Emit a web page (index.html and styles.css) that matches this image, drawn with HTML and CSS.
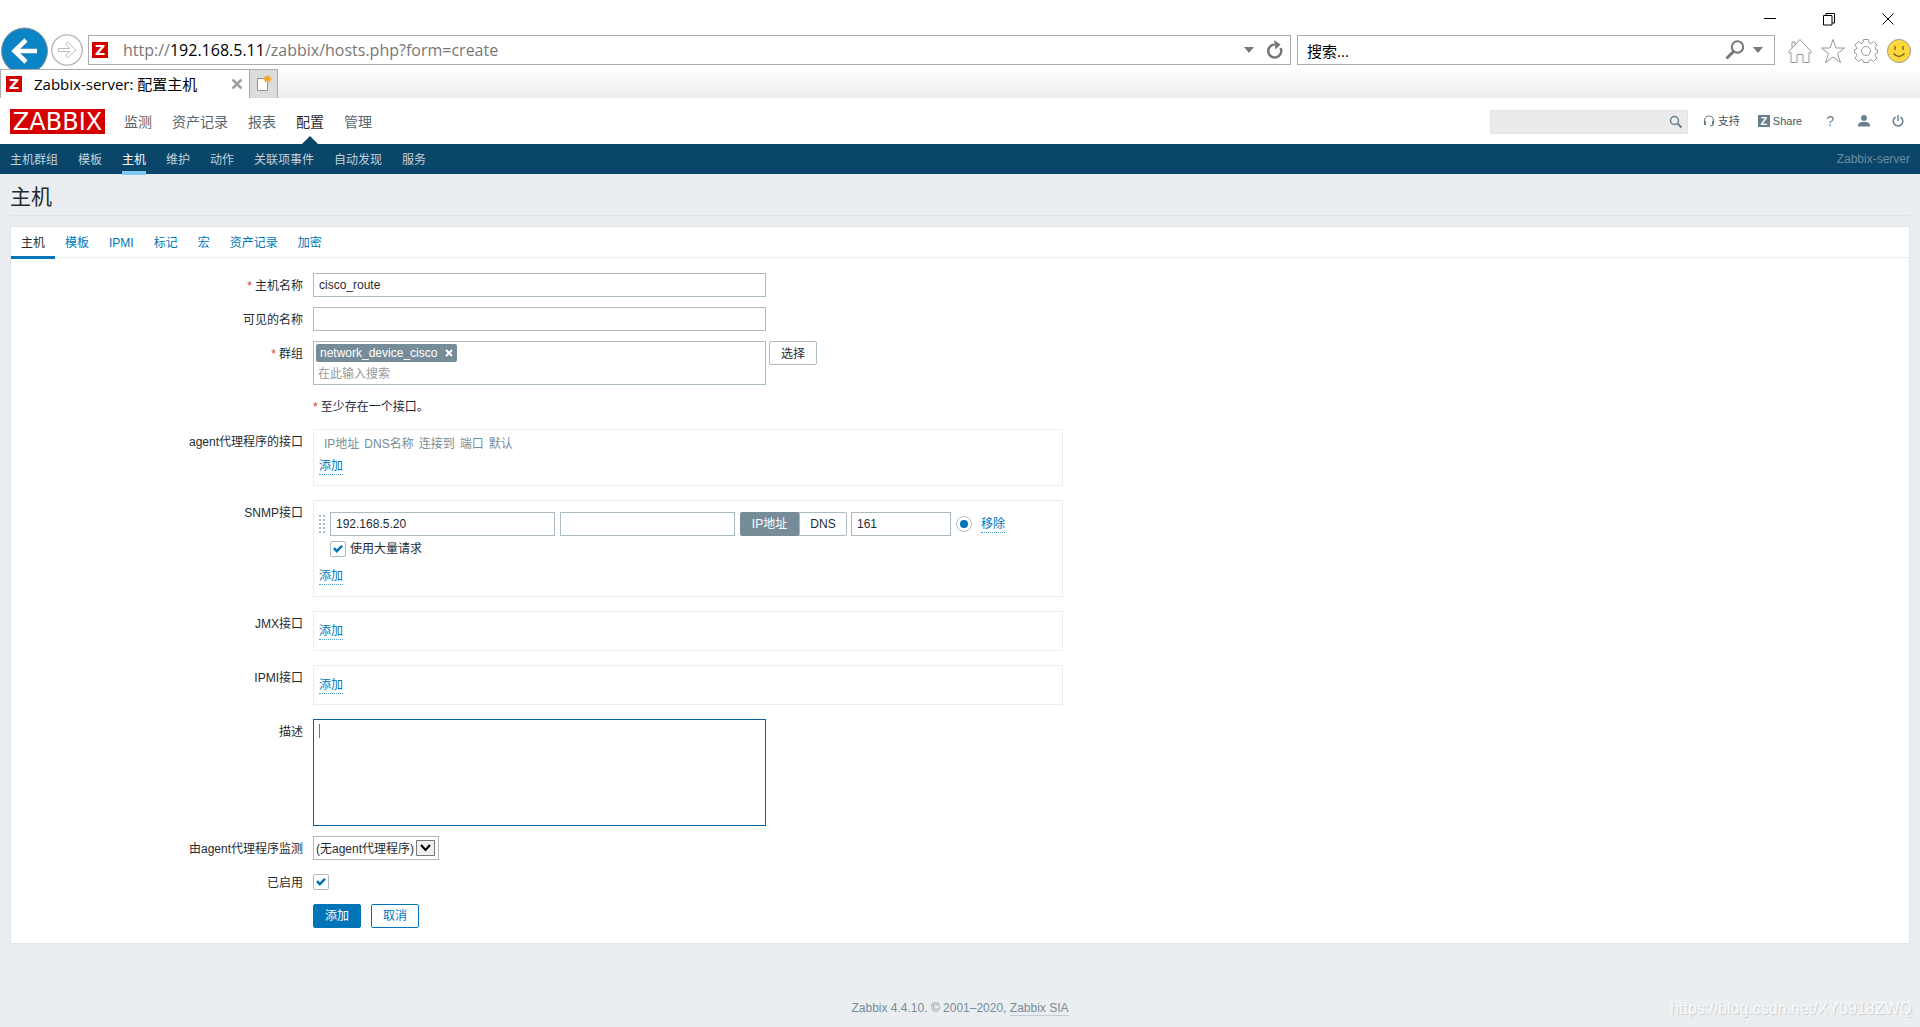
FILE: index.html
```html
<!DOCTYPE html>
<html lang="zh-CN">
<head>
<meta charset="utf-8">
<meta name="viewport" content="width=device-width, initial-scale=1">
<title>Zabbix-server: 配置主机</title>
<link rel="stylesheet" href="styles.css">
</head>
<body>
<div class="browser">
  <div class="window-controls">
    <button type="button" aria-label="最小化"><svg width="14" height="14"><path d="M1 6.500h12"/></svg></button>
    <button type="button" aria-label="还原"><svg width="14" height="14"><path d="M1.500 3.500h8.500v9.500h-8.500zM4 3.500v-2h8.500v9.500h-2.500"/></svg></button>
    <button type="button" aria-label="关闭"><svg width="14" height="14"><path d="M1.500 1.500l11 11M12.500 1.500l-11 11"/></svg></button>
  </div>
  <div class="navbar">
    <button type="button" class="back" aria-label="后退">
      <svg width="48" height="48" viewBox="0 0 48 48"><circle cx="24.500" cy="24" r="23" fill="#0a84c4" stroke="#8a9298" stroke-width="1"/><path d="M37 24H15M26 13L14.500 24L26 35" fill="none" stroke="#fff" stroke-width="4.500"/></svg>
    </button>
    <button type="button" class="forward" aria-label="前进">
      <svg width="32" height="32" viewBox="0 0 32 32" fill="none"><circle cx="16" cy="16" r="15.200" stroke="#b4b4b4" stroke-width="1.300"/><path d="M7.500 14.500h11l-4-4.500 2-2 8.500 8-8.500 8-2-2 4-4.500h-11z" stroke="#bbb"/></svg>
    </button>
    <div class="address">
      <span class="favicon">Z</span>
      <span class="url">http://<b>192.168.5.11</b>/zabbix/hosts.php?form=create</span>
      <svg width="10" height="6"><path d="M0 0h10l-5 6z" fill="#777"/></svg>
      <svg width="18" height="20" viewBox="0 0 18 20"><path d="M8.500 4.500A6.500 6.500 0 1 0 14.500 8" fill="none" stroke="#777" stroke-width="2.500"/><path d="M8 0l6.500 4.500-5 5z" fill="#777"/></svg>
    </div>
    <div class="web-search">
      <input type="text" value="搜索..." aria-label="搜索">
      <svg width="20" height="20" viewBox="0 0 20 20" fill="none" stroke="#777"><circle cx="12.500" cy="7" r="5.700" stroke-width="2"/><path d="M8.500 11.500L1.500 18.500" stroke-width="3"/></svg>
      <svg width="10" height="6"><path d="M0 0h10l-5 6z" fill="#777"/></svg>
    </div>
    <div class="browser-tools">
      <button type="button" aria-label="主页"><svg width="26" height="26" viewBox="0 0 26 26"><path d="M1.500 14L13 1.500 24.500 14l-1.500 1.500-1-1v10h-6v-8h-6v8H4v-10l-1 1zM5 10V4h3v3"/></svg></button>
      <button type="button" aria-label="收藏夹"><svg width="26" height="26" viewBox="0 0 26 26"><path d="M13 1.500l3 8.500h8.500l-7 5.500 3 9-7.500-5.500-7.500 5.500 3-9-7-5.500H10z"/></svg></button>
      <button type="button" aria-label="工具"><svg width="26" height="26" viewBox="0 0 26 26"><path d="M10.500 1.500h5l.5 3.200 1.800.8 2.700-2 3.500 3.500-2 2.700.8 1.800 1.700.3v3l-1.700.7-.8 1.800 2 2.700-3.500 3.500-2.700-2-1.800.8-.5 2.200h-5l-.5-2.200-1.800-.8-2.700 2L2 20l2-2.700-.8-1.800-1.700-.7v-3l1.700-.3.800-1.800-2-2.700 3.500-3.500 2.700 2 1.800-.8z"/><circle cx="13" cy="13" r="4.500"/></svg></button>
      <button type="button" aria-label="反馈"><svg width="26" height="26" viewBox="0 0 26 26"><circle class="face" cx="13" cy="13" r="11.500"/><path class="smile" d="M9 8v4M17 8v4M7.500 15.500q5.500 6 11 0"/></svg></button>
    </div>
  </div>
  <div class="tabstrip">
    <div class="browser-tab"><span class="favicon">Z</span><span class="tab-title">Zabbix-server: 配置主机</span>
      <button type="button" aria-label="关闭标签页"><svg width="12" height="12"><path d="M1.500 1.500l9 9M10.500 1.500l-9 9" stroke="#a0a0a0" stroke-width="2.500"/></svg></button></div>
    <button type="button" class="new-tab" aria-label="新建标签页"><svg width="16" height="18" viewBox="0 0 16 18"><path d="M1.500 3.500h10v12h-10z" fill="#fff" stroke="#909090"/><path d="M11.500 0v8M7.500 4h8M8.700 1.200l5.600 5.600M14.300 1.200L8.700 6.800" stroke="#f2a51d" stroke-width="1.500"/></svg></button>
  </div>
</div>

<header class="top">
  <a class="logo" href="#">ZABBIX</a>
  <nav class="main-menu" aria-label="主菜单">
    <a href="#">监测</a><a href="#">资产记录</a><a href="#">报表</a><a href="#" class="selected">配置</a><a href="#">管理</a>
  </nav>
  <div class="search">
    <input type="text" aria-label="搜索">
    <button type="button" aria-label="搜索"><svg width="14" height="14" viewBox="0 0 14 14" fill="none" stroke="#69808d"><circle cx="5.500" cy="5.500" r="4" stroke-width="1.500"/><path d="M8.500 8.500l4 4" stroke-width="2"/></svg></button>
  </div>
  <div class="user-menu">
    <a href="#"><svg width="12" height="12" viewBox="0 0 12 12" fill="none" stroke="#69808d"><path d="M1.500 8V5.500a4.500 4.500 0 0 1 9 0V8M10.500 8q0 3-3.500 3" stroke-width="1.200"/><path d="M2 6v4M10 6v3.500" stroke-width="2"/></svg>支持</a>
    <a href="#"><span class="share">Z</span>Share</a>
    <a href="#" class="help">?</a>
    <a href="#" aria-label="用户"><svg width="12" height="12" viewBox="0 0 12 12" fill="#69808d"><circle cx="6" cy="3" r="2.900"/><path d="M0 11.500V10q0-2.500 4-3h4q4 .5 4 3v1.500z"/></svg></a>
    <a href="#" aria-label="退出"><svg width="12" height="12" viewBox="0 0 12 12" fill="none" stroke="#69808d" stroke-width="1.500"><path d="M3.500 2A4.800 4.800 0 1 0 8.500 2M6 0v6"/></svg></a>
  </div>
</header>
<nav class="sub-menu" aria-label="配置">
  <a href="#">主机群组</a><a href="#">模板</a><a href="#" class="selected">主机</a><a href="#">维护</a><a href="#">动作</a><a href="#">关联项事件</a><a href="#">自动发现</a><a href="#">服务</a>
  <span class="server-name">Zabbix-server</span>
</nav>

<main>
  <h1>主机</h1>
  <form class="panel">
    <nav class="tabs" aria-label="主机配置">
      <a href="#" class="selected">主机</a><a href="#">模板</a><a href="#">IPMI</a><a href="#">标记</a><a href="#">宏</a><a href="#">资产记录</a><a href="#">加密</a>
    </nav>
    <div class="form-grid">
      <label class="required" for="host">主机名称</label>
      <div><input class="wide" id="host" type="text" value="cisco_route"></div>

      <label for="visible">可见的名称</label>
      <div><input class="wide" id="visible" type="text"></div>

      <label class="required" for="groups">群组</label>
      <div class="group-row">
        <div class="multiselect">
          <span class="chip">network_device_cisco<button type="button" aria-label="移除"><svg width="8" height="8"><path d="M1 1l6 6M7 1L1 7" stroke="#fff" stroke-width="2"/></svg></button></span>
          <input id="groups" type="text" placeholder="在此输入搜索">
        </div>
        <button type="button" class="btn-grey">选择</button>
      </div>

      <p class="required note">至少存在一个接口。</p>

      <span class="label">agent代理程序的接口</span>
      <div class="box agent">
        <table><thead><tr><th>IP地址</th><th>DNS名称</th><th>连接到</th><th>端口</th><th>默认</th></tr></thead></table>
        <a class="link" href="#">添加</a>
      </div>

      <span class="label">SNMP接口</span>
      <div class="box snmp">
        <div class="interface">
          <span class="drag"></span>
          <input class="ip" type="text" value="192.168.5.20" aria-label="IP地址">
          <input class="dns" type="text" aria-label="DNS名称">
          <div class="segmented"><button type="button" class="on">IP地址</button><button type="button">DNS</button></div>
          <input class="port" type="text" value="161" aria-label="端口">
          <input type="radio" checked aria-label="默认">
          <a class="link" href="#">移除</a>
        </div>
        <div class="bulk"><input id="bulk" type="checkbox" checked><label for="bulk">使用大量请求</label></div>
        <a class="link" href="#">添加</a>
      </div>

      <span class="label">JMX接口</span>
      <div class="box short"><a class="link" href="#">添加</a></div>

      <span class="label">IPMI接口</span>
      <div class="box short"><a class="link" href="#">添加</a></div>

      <label for="description">描述</label>
      <textarea class="wide" id="description"></textarea>

      <label for="proxy">由agent代理程序监测</label>
      <div class="select"><select id="proxy"><option>(无agent代理程序)</option></select>
        <svg width="19" height="16"><path d="M.5.5h18v15H.5z" fill="#f0f0f0" stroke="#777"/><path d="M5 5l4.500 5L14 5" fill="none" stroke="#000" stroke-width="2"/></svg></div>

      <label for="enabled">已启用</label>
      <div class="check-row"><input id="enabled" type="checkbox" checked></div>

      <div class="actions"><button type="submit" class="primary">添加</button><button type="button">取消</button></div>
    </div>
  </form>
</main>
<footer>Zabbix 4.4.10. © 2001–2020, <a href="#">Zabbix SIA</a></footer>
<div class="watermark">https://blog.csdn.net/XY0918ZWQ</div>
</body>
</html>
```

FILE: styles.css
```css
* { box-sizing: border-box; }

body {
  margin: 0;
  min-height: 100vh;
  display: flex;
  flex-direction: column;
  position: relative;
  background: #ebeef0;
  color: #1f2c33;
  font: 12px/24px "Liberation Sans", "Noto Sans CJK SC", sans-serif;
}

a { color: #0275b8; text-decoration: none; }
svg { display: block; flex: none; }
button { font: inherit; color: inherit; margin: 0; padding: 0; border: 0; background: none; }
input, select, textarea { font: inherit; color: inherit; margin: 0; }

input[type="text"], textarea, select {
  height: 24px;
  padding: 0 5px;
  border: 1px solid #acbbc2;
  border-radius: 0;
  background: #fff;
  outline: 0;
}

/* Browser window */
.browser { background: #fff; color: #000; font: 15px/20px "Open Sans", "Noto Sans CJK SC", sans-serif; }
.window-controls { display: flex; justify-content: flex-end; gap: 45px; height: 27px; padding: 10px 25px 0 0; }
.window-controls path { fill: none; stroke: #000; stroke-width: 1; }
.navbar { display: flex; height: 42px; overflow: hidden; padding-right: 8px; }
.back { align-self: flex-start; }
.forward { align-self: flex-start; margin: 7px 5px 0 3px; }
.address, .web-search { display: flex; align-items: center; height: 30px; margin-top: 8px; border: 1px solid #ababab; }
.address { flex: 1; padding: 0 6px 0 3px; gap: 12px; }
.url { flex: 1; margin-left: 3px; color: #777; font-size: 16px; }
.url b { color: #000; font-weight: 400; }
.web-search { width: 478px; margin-left: 6px; padding-right: 11px; gap: 8px; }
.web-search input[type="text"] { flex: 1; border: 0; padding: 0 9px; }
.favicon { width: 16px; height: 16px; background: #d40000; color: #fff; font: bold 14px/16px "DejaVu Sans", sans-serif; text-align: center; }
.browser-tools { display: flex; align-items: flex-start; gap: 7px; margin: 11px 0 0 12px; }
.browser-tools svg { fill: none; stroke: #999; }
.browser-tools .face { fill: #ffd93b; }
.browser-tools .smile { stroke: #80681b; stroke-width: 1.5; }
.tabstrip { display: flex; height: 29px; background: linear-gradient(#fff, #fafafa 20%, #ececec); }
.browser-tab { display: flex; align-items: center; width: 250px; padding: 0 6px 0 5px; background: #fff; border: 1px solid #ababab; border-bottom: 0; }
.tab-title { flex: 1; margin-left: 12px; }
.new-tab { width: 28px; padding-left: 6px; background: #dcdcdc; border: 1px solid #ababab; border-width: 1px 1px 0 0; }

/* Header */
.top { display: flex; align-items: center; height: 46px; padding: 0 10px; background: #fff; }
.logo { width: 95px; height: 25px; background: #d40000; color: #fff; font: 24px/26px "DejaVu Sans", sans-serif; text-align: center; }
.main-menu { display: flex; gap: 20px; height: 46px; margin-left: 19px; font-size: 14px; line-height: 48px; }
.main-menu a { color: #57656d; position: relative; }
.main-menu .selected { color: #1f2c33; }
.main-menu .selected::after {
  content: "";
  position: absolute;
  left: 50%;
  top: 38px;
  margin-left: -8px;
  border: 8px solid transparent;
  border-top: 0;
  border-bottom-color: #0a466a;
}
.search { display: flex; width: 198px; height: 24px; margin: 2px 0 0 auto; border: 1px solid #dfe4e7; background: #ebebeb; }
.search input[type="text"] { flex: 1; min-width: 0; height: 22px; border: 0; background: none; }
.search button { padding: 0 4px; }
.user-menu { display: flex; gap: 22px; margin: 0 6px 0 15px; font-size: 11px; }
.user-menu a { display: flex; align-items: center; gap: 3px; color: #465760; }
.user-menu a:first-child { margin-right: -4px; }
.user-menu .help { color: #69808d; font-size: 14px; margin: 0 2px; }
.share { width: 12px; height: 12px; background: #69808d; color: #fff; font-weight: bold; line-height: 12px; text-align: center; }

.sub-menu { display: flex; gap: 20px; height: 30px; padding: 0 10px; background: #0a466a; line-height: 32px; }
.sub-menu a { height: 31px; color: #c2d1da; }
.sub-menu .selected { color: #fff; border-bottom: 4px solid #7ec8f2; }
.server-name { margin-left: auto; color: #6c8ca0; line-height: 30px; }

/* Page */
main { padding: 0 10px; }
h1 { height: 42px; margin: 0 0 10px; border-bottom: 1px solid #dfe4e7; font-size: 21px; font-weight: 400; line-height: 46px; }
.panel { background: #fff; border: 1px solid #dfe4e7; padding-bottom: 15px; }
.tabs { display: flex; height: 31px; border-bottom: 1px solid #ebeef0; line-height: 33px; }
.tabs a { height: 32px; padding: 0 10px; }
.tabs .selected { color: #1f2c33; border-bottom: 3px solid #0275b8; }

.form-grid { display: grid; grid-template-columns: 292px 1fr; gap: 10px; margin-top: 15px; }
.form-grid > label, .label { height: 24px; line-height: 26px; text-align: right; }
.required::before { content: "*"; margin-right: 3px; color: #e33734; }
.note, .actions { grid-column: 2; margin: 0; }
.wide { width: 453px; }
.form-grid > div { display: flex; }
.form-grid > .group-row { gap: 3px; }
.multiselect { width: 453px; height: 44px; padding: 2px; border: 1px solid #acbbc2; }
.multiselect input[type="text"] { display: block; width: 100%; height: 22px; border: 0; padding: 2px 2px 0; }
.multiselect input::placeholder { color: #999; opacity: 1; }
.chip { display: flex; align-items: center; gap: 8px; width: fit-content; height: 18px; padding: 0 4px; border-radius: 2px; background: #768d99; color: #fff; }
.btn-grey { width: 48px; height: 24px; border: 1px solid #acbbc2; border-radius: 2px; line-height: 24px; }

.form-grid > .box { display: flex; flex-direction: column; align-items: flex-start; width: 750px; margin-bottom: 4px; padding: 11px 5px; border: 1px solid #ebeef0; }
.form-grid > .short { padding-bottom: 10px; }
.form-grid > .agent { padding: 4px 5px 10px; gap: 4px; }
.box table { border-spacing: 5px 0; }
.box th { padding: 0; color: #768d99; font-weight: 400; line-height: 20px; }
.link { border-bottom: 1px dotted #4a9dcc; line-height: 16px; }
.interface { display: flex; align-items: center; gap: 5px; }
.interface .link { margin-left: 4px; }
.drag {
  width: 6px;
  height: 18px;
  background: repeating-linear-gradient(transparent 0 2px, #fff 2px 4px), repeating-linear-gradient(90deg, #acbbc2 0 2px, #fff 2px 4px);
}
.ip { width: 225px; }
.dns { width: 175px; }
.port { width: 100px; }
.segmented { display: flex; margin-right: -1px; }
.segmented button { width: 48px; height: 24px; border: 1px solid #acbbc2; border-radius: 0 2px 2px 0; line-height: 22px; }
.segmented .on { width: 59px; border-color: #768d99; border-radius: 2px 0 0 2px; background: #768d99; color: #fff; }
.bulk { display: flex; align-items: center; gap: 4px; margin: 1px 0 7px 11px; }

input[type="checkbox"], input[type="radio"] { appearance: none; display: grid; place-items: center; width: 16px; height: 16px; border: 1px solid #acbbc2; border-radius: 2px; background: #fff; }
input[type="checkbox"]::before { content: ""; width: 10px; height: 8px; background: #0275b8; clip-path: polygon(0 50%, 18% 28%, 38% 52%, 82% 0, 100% 20%, 38% 100%); }
input[type="radio"] { border-radius: 50%; }
input[type="radio"]::before { content: ""; width: 8px; height: 8px; border-radius: 50%; background: #0275b8; }

/* The 1px gradient is the text caret of the focused field */
textarea.wide { display: block; height: 107px; resize: none; border-color: #02659f; background: linear-gradient(#777, #777) 5px 4px / 1px 14px no-repeat #fff; }
.select { position: relative; width: 126px; }
.select select { width: 100%; padding: 0 20px 0 2px; appearance: none; }
.select svg { position: absolute; right: 4px; top: 4px; pointer-events: none; }
.check-row { align-items: center; }
.actions { gap: 10px; }
.actions button { width: 48px; height: 24px; border: 1px solid #0275b8; border-radius: 2px; color: #0275b8; line-height: 22px; }
.actions .primary { background: #0275b8; color: #fff; }

footer { margin-top: auto; padding-bottom: 7px; color: #768d99; text-align: center; }
footer a { color: #768d99; border-bottom: 1px solid #c3cdd2; }
.watermark { position: absolute; right: 8px; bottom: 6px; color: #f8f9fa; font-size: 16px; text-shadow: 1px 1px 1px #c8cccf; }
```
